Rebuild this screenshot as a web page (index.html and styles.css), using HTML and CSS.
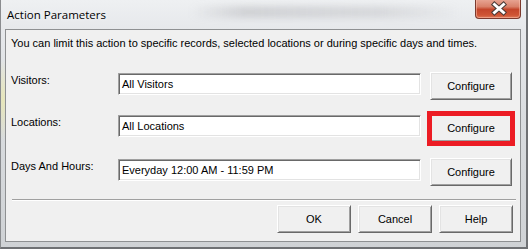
FILE: index.html
```html
<!DOCTYPE html>
<html>
<head>
<meta charset="utf-8">
<link rel="stylesheet" href="styles.css">
</head>
<body>
<div class="window">
  <div class="titlebar">
    <span class="title">Action Parameters</span>
    <span class="glass-blur"></span>
    <button class="close" aria-label="Close">
      <svg width="46" height="20" viewBox="0 0 46 20">
        <path d="M18.5 5.5 L27.5 13.5 M27.5 5.5 L18.5 13.5" stroke="#4a3a36" stroke-width="5" stroke-linecap="square" fill="none"/>
        <path d="M18.5 5.5 L27.5 13.5 M27.5 5.5 L18.5 13.5" stroke="#ffffff" stroke-width="3" stroke-linecap="square" fill="none"/>
      </svg>
    </button>
  </div>
  <div class="client">
    <p class="intro">You can limit this action to specific records, selected locations or during specific days and times.</p>
    <div class="rows">
      <div class="row">
        <span class="label">Visitors:</span>
        <div class="field">All Visitors</div>
        <button class="btn">Configure</button>
      </div>
      <div class="row">
        <span class="label">Locations:</span>
        <div class="field">All Locations</div>
        <span class="marked">
          <button class="btn">Configure</button>
          <span class="highlight"></span>
        </span>
      </div>
      <div class="row row-days">
        <span class="label">Days And Hours:</span>
        <div class="field">Everyday 12:00 AM - 11:59 PM</div>
        <button class="btn">Configure</button>
      </div>
    </div>
    <div class="separator"></div>
    <div class="actions">
      <button class="btn btn-action">OK</button>
      <button class="btn btn-action">Cancel</button>
      <button class="btn btn-action">Help</button>
    </div>
  </div>
</div>
</body>
</html>
```
FILE: styles.css
```css
* { box-sizing: border-box; }
html, body {
  margin: 0;
  padding: 0;
  background: #cfd2d6;
}
.window {
  width: 528px;
  height: 249px;
  display: flex;
  flex-direction: column;
  background:
    radial-gradient(ellipse 8px 40px at 2px 100px, rgba(240, 236, 150, 0.55), rgba(240, 236, 150, 0) 100%),
    linear-gradient(to bottom, #eef0f2 0px, #e6e8eb 30px, #d9dcdf 120px, #cfd2d5 249px);
  border-left: 1px solid #8a8c8f;
  border-right: 2px solid #6f7174;
  border-bottom: 2px solid #6f7174;
  position: relative;
}
.titlebar {
  height: 29px;
  flex: none;
  display: flex;
  align-items: flex-start;
  justify-content: space-between;
  padding-left: 6px;
  position: relative;
}
.title {
  font-family: "Open Sans", "Noto Sans", sans-serif;
  font-size: 11.5px;
  line-height: 16px;
  margin-top: 7px;
  color: #000;
  text-shadow: 0 0 6px rgba(255,255,255,0.9);
  position: relative;
  z-index: 1;
}
.glass-blur {
  position: absolute;
  left: 190px;
  top: 6px;
  width: 270px;
  height: 12px;
  background: linear-gradient(to right, rgba(150,150,155,0), rgba(150,150,155,0.3) 20%, rgba(150,150,155,0.22) 70%, rgba(150,150,155,0));
  filter: blur(3px);
}
.close {
  width: 46px;
  height: 20px;
  margin-right: 5px;
  margin-top: -1px;
  padding: 0;
  border: 1px solid #7b3a2e;
  border-top: none;
  border-radius: 0 0 4px 4px;
  background: linear-gradient(to bottom, #e9a897 0%, #d9816a 40%, #c4462b 55%, #cf5535 85%, #dd7a5a 100%);
  box-shadow: inset 0 0 0 1px rgba(255,200,180,0.5);
  display: block;
  position: relative;
  z-index: 1;
}
.close svg { display: block; }
.client {
  flex: 1;
  margin: 0 5px 5px 4px;
  border: 1px solid #8e9092;
  background: #f0f0f0;
  padding: 7px 8px 8px 5px;
  display: flex;
  flex-direction: column;
  font-family: "Liberation Sans", Arial, sans-serif;
  font-size: 11px;
  color: #000;
}
.intro {
  margin: 0;
  line-height: 13px;
  white-space: nowrap;
}
.rows {
  margin-top: 22px;
  display: flex;
  flex-direction: column;
  gap: 14px;
}
.row {
  display: flex;
  align-items: flex-start;
  height: 28px;
}
.row-days {
  margin-top: 2px;
}
.label {
  width: 107px;
  flex: none;
  line-height: 13px;
  margin-top: 2px;
}
.field {
  width: 303px;
  height: 22px;
  margin-top: 1px;
  margin-right: 9px;
  background: #fff;
  border-style: solid;
  border-width: 1px;
  border-color: #a0a0a0 #ffffff #ffffff #a0a0a0;
  box-shadow: inset 1px 1px 0 #696969, inset -1px -1px 0 #e3e3e3;
  padding: 4px 3px 0 3px;
  line-height: 13px;
  white-space: nowrap;
}
.btn {
  font-family: "Liberation Sans", Arial, sans-serif;
  font-size: 11px;
  color: #000;
  width: 82px;
  height: 28px;
  padding: 0;
  background: #f0f0f0;
  border-style: solid;
  border-width: 1px;
  border-color: #ffffff #696969 #696969 #ffffff;
  box-shadow: inset 1px 1px 0 #e3e3e3, inset -1px -1px 0 #a0a0a0;
  flex: none;
}
.marked {
  position: relative;
  display: block;
  width: 82px;
  height: 28px;
}
.marked .btn { display: block; }
.highlight {
  position: absolute;
  left: -3px;
  right: -3px;
  top: -3px;
  bottom: -4px;
  border: 5px solid #ec1c24;
}
.separator {
  margin: 13px -4px 0 1px;
  height: 2px;
  border-top: 1px solid #a0a0a0;
  border-bottom: 1px solid #ffffff;
}
.actions {
  margin-top: 4px;
  margin-right: -1px;
  display: flex;
  justify-content: flex-end;
  gap: 7px;
}
.btn-action {
  width: 74px;
}
```
